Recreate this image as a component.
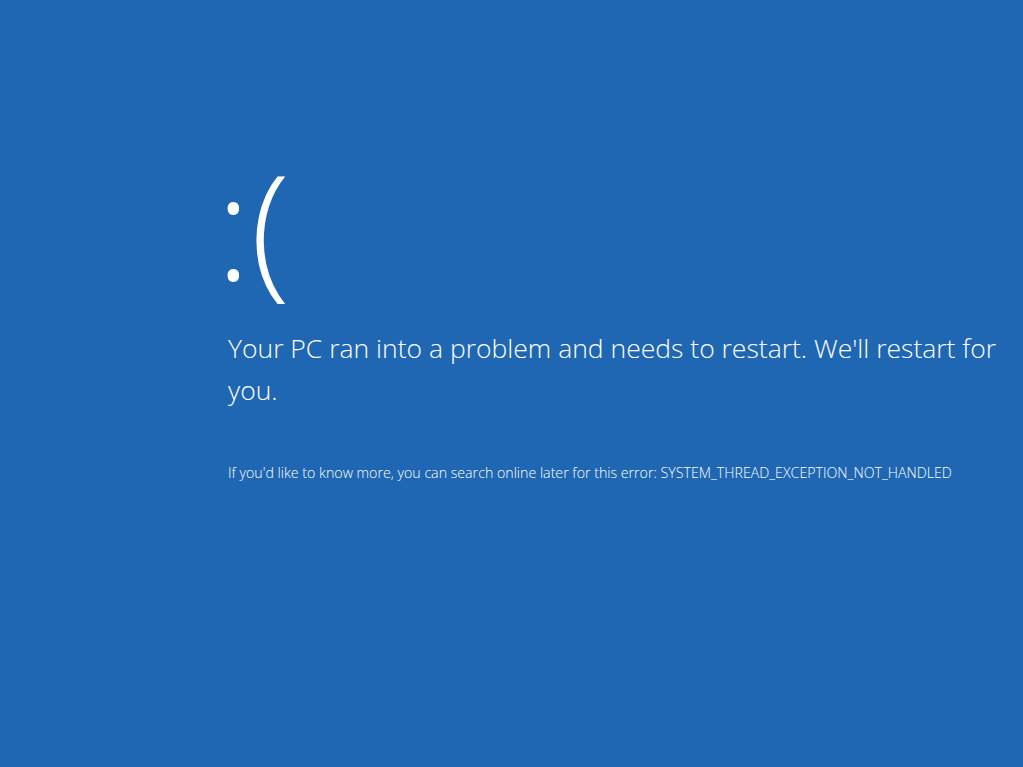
export default function App() {
  return (
    <div
      className="w-[1023px] h-[767px] overflow-hidden bg-[#1f67b2] text-white"
      style={{ fontFamily: '"Open Sans", "Noto Sans", sans-serif' }}
    >
      <div className="pl-[216px] pt-[135px]">
        <div className="text-[145px] leading-[180px] font-light">:(</div>
        <p className="mt-[12px] pl-[12px] w-[800px] text-[26.5px] leading-[42px] font-light">
          Your PC ran into a problem and needs to restart. We'll restart for you.
        </p>
        <p className="mt-[52px] pl-[12px] text-[14.2px] leading-[20px] font-light">
          If you'd like to know more, you can search online later for this error: SYSTEM_THREAD_EXCEPTION_NOT_HANDLED
        </p>
      </div>
    </div>
  );
}
